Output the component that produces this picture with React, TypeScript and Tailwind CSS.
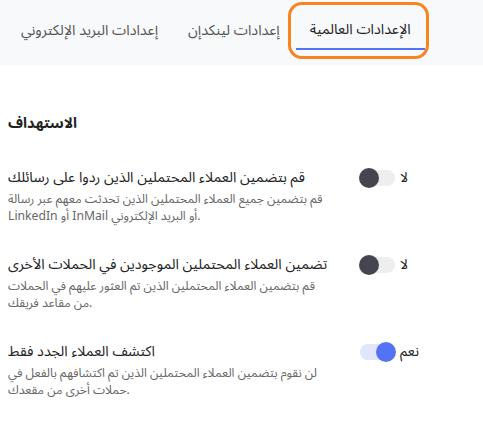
import React from "react";

function Toggle({ on, label }: { on: boolean; label: string }) {
  return (
    <div className="flex items-center gap-[5px]">
      <div
        className={
          on
            ? "relative w-[35px] h-[16px] rounded-full bg-[#e1e6fc]"
            : "relative w-[35px] h-[16px] rounded-full bg-[#eeeeee]"
        }
      >
        <div
          className={
            on
              ? "absolute top-[-2px] right-[-1px] w-[20px] h-[20px] rounded-full bg-[#5373f4]"
              : "absolute top-[-2px] left-[-1px] w-[20px] h-[20px] rounded-full bg-[#45454f]"
          }
        />
      </div>
      <span className="text-[14px] leading-[16px] text-[#222]">{label}</span>
    </div>
  );
}

function Row({
  title,
  desc,
  on,
  label,
}: {
  title: string;
  desc: string;
  on: boolean;
  label: string;
}) {
  return (
    <div className="flex items-start">
      <div className="w-[322px]">
        <div className="text-[14.3px] leading-[20px] text-[#222]">{title}</div>
        <div className="mt-[3px] text-[12.2px] leading-[17px] text-[#666]">{desc}</div>
      </div>
      <div className="ml-[30px] pt-[2px]">
        <Toggle on={on} label={label} />
      </div>
    </div>
  );
}

export default function App() {
  return (
    <div
      className="w-[483px] h-[431px] bg-white overflow-hidden"
      style={{ fontFamily: '"Noto Sans Arabic", "Noto Sans", sans-serif' }}
    >
      <div className="h-[65px] bg-[#f8f9fa] flex items-start pt-[12px] pl-[7px]">
        <div className="flex gap-[2px]">
          <div className="px-[14px] h-[38px] flex items-center text-[14.3px] text-[#555]">
            إعدادات البريد الإلكتروني
          </div>
          <div className="px-[14px] h-[38px] flex items-center text-[14.3px] text-[#555]">
            إعدادات لينكدإن
          </div>
          <div className="relative px-[14px] h-[38px] flex items-center text-[14.3px] text-[#222] border-b-2 border-[#5373f4]">
            الإعدادات العالمية
            <div className="absolute left-[-8px] right-[-4px] top-[-10px] bottom-[-11px] border-[3.5px] border-[#f7841f] rounded-[14px]" />
          </div>
        </div>
      </div>
      <div className="px-[8px]">
        <h2 className="mt-[47px] text-[14.7px] font-bold text-[#222] leading-[24px]">الاستهداف</h2>
        <div className="mt-[32px] flex flex-col gap-[30px]">
          <Row
            title="قم بتضمين العملاء المحتملين الذين ردوا على رسائلك"
            desc="قم بتضمين جميع العملاء المحتملين الذين تحدثت معهم عبر رسالة LinkedIn أو InMail أو البريد الإلكتروني."
            on={false}
            label="لا"
          />
          <Row
            title="تضمين العملاء المحتملين الموجودين في الحملات الأخرى"
            desc="قم بتضمين العملاء المحتملين الذين تم العثور عليهم في الحملات من مقاعد فريقك."
            on={false}
            label="لا"
          />
          <Row
            title="اكتشف العملاء الجدد فقط"
            desc="لن نقوم بتضمين العملاء المحتملين الذين تم اكتشافهم بالفعل في حملات أخرى من مقعدك."
            on={true}
            label="نعم"
          />
        </div>
      </div>
    </div>
  );
}
